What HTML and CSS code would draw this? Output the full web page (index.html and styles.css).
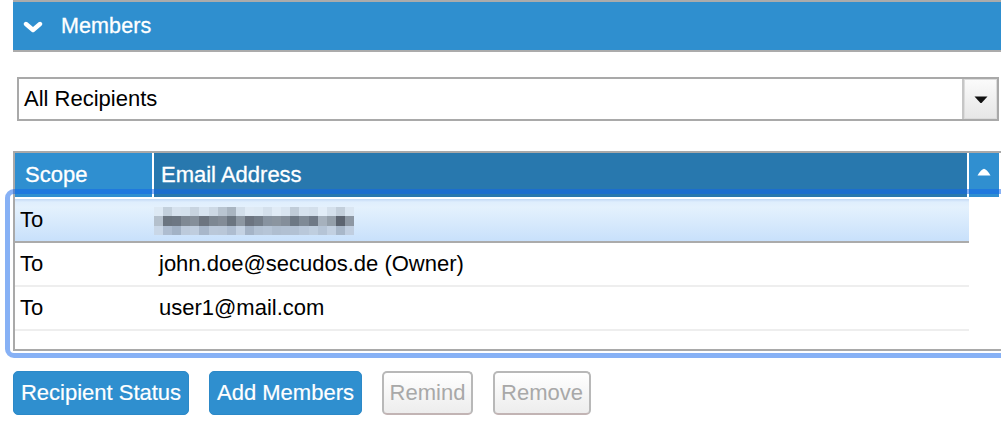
FILE: index.html
```html
<!DOCTYPE html>
<html>
<head>
<meta charset="utf-8">
<link rel="stylesheet" href="styles.css">
</head>
<body>
<div class="page">
  <div class="panel-head">
    <svg class="chev" width="20" height="12" viewBox="0 0 20 12"><polyline points="3,3 10,9 17,3" fill="none" stroke="#fff" stroke-width="4.4" stroke-linecap="round" stroke-linejoin="round"/></svg>
    <span class="panel-title">Members</span>
  </div>

  <div class="select">
    <span class="select-label">All Recipients</span>
    <span class="select-btn"><svg width="14" height="8" viewBox="0 0 14 8"><path d="M0.5 0.5 H13.5 L8 6.5 Q7 7.5 6 6.5 Z" fill="#111"/></svg></span>
  </div>

  <div class="grid">
    <div class="grid-head">
      <div class="hcell hscope">Scope</div>
      <div class="hcell hemail">Email Address</div>
      <div class="hcell hscroll"><svg width="14" height="8" viewBox="0 0 14 8"><path d="M0.5 7.5 H13.5 Q10 1.5 7 0.8 Q4 1.5 0.5 7.5 Z" fill="#fff"/></svg></div>
    </div>
    <div class="grid-body">
      <div class="row sel">
        <div class="cell scope">To</div>
        <div class="cell email blur">
          <svg width="200" height="28" viewBox="0 0 22 3" preserveAspectRatio="none" shape-rendering="crispEdges">
            <rect x="0" y="0" width="1" height="1" fill="#dde9f4"/><rect x="1" y="0" width="1" height="1" fill="#c3d0dc"/><rect x="2" y="0" width="1" height="1" fill="#d6e2ee"/><rect x="3" y="0" width="1" height="1" fill="#d4e1ed"/><rect x="4" y="0" width="1" height="1" fill="#c8d4e0"/><rect x="5" y="0" width="1" height="1" fill="#d8e4f0"/><rect x="6" y="0" width="1" height="1" fill="#cdd9e5"/><rect x="7" y="0" width="1" height="1" fill="#b9c5d1"/><rect x="8" y="0" width="1" height="1" fill="#a9b5c1"/><rect x="9" y="0" width="1" height="1" fill="#d2deea"/><rect x="10" y="0" width="1" height="1" fill="#dfeaf5"/><rect x="11" y="0" width="1" height="1" fill="#dde9f4"/><rect x="12" y="0" width="1" height="1" fill="#d4e0ec"/><rect x="13" y="0" width="1" height="1" fill="#e0ebf6"/><rect x="14" y="0" width="1" height="1" fill="#d9e5f1"/><rect x="15" y="0" width="1" height="1" fill="#c0ccd8"/><rect x="16" y="0" width="1" height="1" fill="#d6e2ee"/><rect x="17" y="0" width="1" height="1" fill="#d3dfeb"/><rect x="18" y="0" width="1" height="1" fill="#e2edf8"/><rect x="19" y="0" width="1" height="1" fill="#d4e0ec"/><rect x="20" y="0" width="1" height="1" fill="#c3cfdb"/><rect x="21" y="0" width="1" height="1" fill="#dae6f2"/>
            <rect x="0" y="1" width="1" height="1" fill="#b4c0cc"/><rect x="1" y="1" width="1" height="1" fill="#6b7580"/><rect x="2" y="1" width="1" height="1" fill="#6d7783"/><rect x="3" y="1" width="1" height="1" fill="#7f8994"/><rect x="4" y="1" width="1" height="1" fill="#858f9a"/><rect x="5" y="1" width="1" height="1" fill="#6d7580"/><rect x="6" y="1" width="1" height="1" fill="#7d8792"/><rect x="7" y="1" width="1" height="1" fill="#838c97"/><rect x="8" y="1" width="1" height="1" fill="#6b7580"/><rect x="9" y="1" width="1" height="1" fill="#8d97a2"/><rect x="10" y="1" width="1" height="1" fill="#6c7480"/><rect x="11" y="1" width="1" height="1" fill="#747e8a"/><rect x="12" y="1" width="1" height="1" fill="#8893a0"/><rect x="13" y="1" width="1" height="1" fill="#8b95a0"/><rect x="14" y="1" width="1" height="1" fill="#848e9a"/><rect x="15" y="1" width="1" height="1" fill="#6d7884"/><rect x="16" y="1" width="1" height="1" fill="#7f8a96"/><rect x="17" y="1" width="1" height="1" fill="#6f7986"/><rect x="18" y="1" width="1" height="1" fill="#a6b1bd"/><rect x="19" y="1" width="1" height="1" fill="#949faa"/><rect x="20" y="1" width="1" height="1" fill="#5c6470"/><rect x="21" y="1" width="1" height="1" fill="#8d97a3"/>
            <rect x="0" y="2" width="1" height="1" fill="#c9d7e7"/><rect x="1" y="2" width="1" height="1" fill="#aebdd0"/><rect x="2" y="2" width="1" height="1" fill="#a2b2c5"/><rect x="3" y="2" width="1" height="1" fill="#bccadb"/><rect x="4" y="2" width="1" height="1" fill="#bfcdde"/><rect x="5" y="2" width="1" height="1" fill="#a8b7ca"/><rect x="6" y="2" width="1" height="1" fill="#bac8d9"/><rect x="7" y="2" width="1" height="1" fill="#b9c7d8"/><rect x="8" y="2" width="1" height="1" fill="#aebdd0"/><rect x="9" y="2" width="1" height="1" fill="#c4d2e3"/><rect x="10" y="2" width="1" height="1" fill="#a5b4c7"/><rect x="11" y="2" width="1" height="1" fill="#b3c2d4"/><rect x="12" y="2" width="1" height="1" fill="#b6c5d7"/><rect x="13" y="2" width="1" height="1" fill="#afbed0"/><rect x="14" y="2" width="1" height="1" fill="#b1c0d2"/><rect x="15" y="2" width="1" height="1" fill="#b2c1d3"/><rect x="16" y="2" width="1" height="1" fill="#b9c8da"/><rect x="17" y="2" width="1" height="1" fill="#bfcedf"/><rect x="18" y="2" width="1" height="1" fill="#b5c4d6"/><rect x="19" y="2" width="1" height="1" fill="#c2d0e1"/><rect x="20" y="2" width="1" height="1" fill="#a8b7c9"/><rect x="21" y="2" width="1" height="1" fill="#c0cee0"/>
          </svg>
        </div>
      </div>
      <div class="row">
        <div class="cell scope">To</div>
        <div class="cell email">john.doe@secudos.de (Owner)</div>
      </div>
      <div class="row">
        <div class="cell scope">To</div>
        <div class="cell email">user1@mail.com</div>
      </div>
    </div>
  </div>

  <div class="actions">
    <button class="btn primary w-status">Recipient Status</button>
    <button class="btn primary w-add">Add Members</button>
    <button class="btn disabled w-remind">Remind</button>
    <button class="btn disabled w-remove">Remove</button>
  </div>

  <div class="focus-ring"></div>
</div>
</body>
</html>
```

FILE: styles.css
```css
html, body {
  margin: 0;
  padding: 0;
  background: #fff;
}
body {
  width: 1001px;
  height: 427px;
  overflow: hidden;
  font-family: "Liberation Sans", Arial, Helvetica, sans-serif;
  font-size: 22px;
  color: #000;
}
.page {
  position: relative;
  width: 1001px;
  height: 427px;
}

/* Panel header */
.panel-head {
  margin-left: 13px;
  width: 1000px;
  height: 48px;
  border-top: 2px solid #ababab;
  border-bottom: 2px solid #ababab;
  background: #2f8fcf;
  display: flex;
  align-items: center;
  color: #fff;
}
.chev {
  margin-left: 10px;
  margin-right: 18px;
  margin-top: 1px;
  flex: none;
}
.panel-title {
  font-size: 21.5px;
  letter-spacing: 0.1px;
  -webkit-text-stroke: 0.3px #fff;
}

/* Select */
.select {
  box-sizing: border-box;
  margin: 25px 0 0 17px;
  width: 982px;
  height: 44px;
  border: 2px solid #a9a9a9;
  display: flex;
  align-items: stretch;
}
.select-label {
  flex: 1;
  display: flex;
  align-items: center;
  padding-left: 5px;
}
.select-btn {
  width: 33px;
  border-left: 2px solid #c6c6c6;
  box-shadow: inset 0 0 0 1px #dcdcdc;
  background: linear-gradient(#fbfbfb, #e6e6e6);
  display: flex;
  align-items: center;
  justify-content: center;
}
.select-btn svg {
  margin-top: 1px;
}

/* Grid */
.grid {
  margin: 30px 0 0 13px;
  width: 1000px;
  border-top: 2px solid #a9a9a9;
  border-left: 2px solid #a9a9a9;
  border-bottom: 2px solid #a9a9a9;
  background: #fff;
}
.grid-head {
  display: flex;
  gap: 2px;
  height: 44px;
  color: #fff;
  font-size: 22px;
}
.hcell {
  display: flex;
  align-items: center;
  -webkit-text-stroke: 0.3px #fff;
}
.hscope {
  width: 127px;
  padding-left: 10px;
  background: #2f8fd0;
}
.hemail {
  width: 806px;
  padding-left: 7px;
  background: #2878ae;
}
.hscroll {
  width: 30px;
  background: #308fd0;
  justify-content: center;
}
.hscroll svg {
  margin-top: -6px;
}
.grid-body {
  box-sizing: border-box;
  height: 152px;
  padding-top: 2px;
  width: 954px;
}
.row {
  height: 42px;
  border-bottom: 2px solid #eeeeee;
  display: flex;
  align-items: center;
}
.row.sel {
  border-bottom-color: #ababab;
  background: linear-gradient(#c2d8f5 0, #dfeefd 3px, #e4f1fd 8px, #d6e9fc 60%, #c8e0fb 100%);
}
.cell {
  padding-left: 5px;
  white-space: nowrap;
}
.cell.scope {
  width: 134px;
}
.cell.email {
  flex: 1;
}
.cell.blur {
  padding-left: 0;
  display: flex;
  margin-top: 2px;
}

/* Buttons */
.actions {
  display: flex;
  gap: 20px;
  margin: 20px 0 0 13px;
}
.btn {
  box-sizing: border-box;
  height: 44px;
  border-radius: 5px;
  font-family: "Liberation Sans", Arial, Helvetica, sans-serif;
  font-size: 22px;
  padding: 0;
  text-align: center;
  white-space: nowrap;
}
.btn.primary {
  background: #2f8fcf;
  color: #fff;
  border: 1px solid #2c89c8;
  -webkit-text-stroke: 0.2px #fff;
}
.btn.disabled {
  background: linear-gradient(#ffffff, #ededed);
  color: #a8a8a8;
  border: 2px solid #b8b8b8;
  border-bottom-color: #c2b4b4;
}
.w-status { width: 176px; }
.w-add { width: 153px; }
.w-remind { width: 91px; }
.w-remove { width: 98px; }

/* Focus ring overlay around the list */
.focus-ring {
  position: absolute;
  left: 5px;
  top: 189px;
  width: 1010px;
  height: 169px;
  box-sizing: border-box;
  border: 5px solid rgba(16, 100, 236, 0.5);
  border-radius: 9px;
  pointer-events: none;
}
```
